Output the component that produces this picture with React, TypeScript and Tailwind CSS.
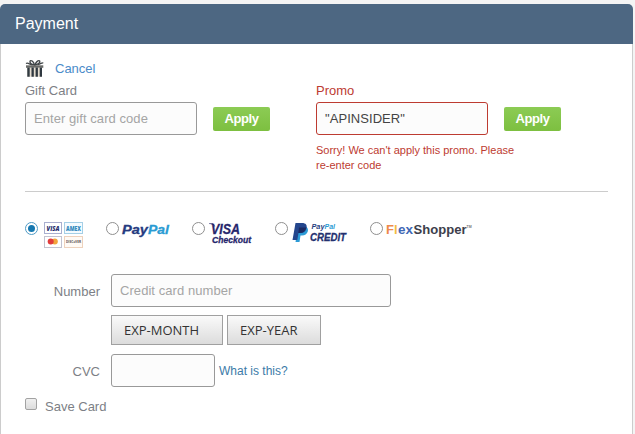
import type React from "react"

const logoFont = "'Open Sans', 'Noto Sans', sans-serif"
const boldLogoFont = "'Liberation Sans', Arial, sans-serif"

function GiftIcon() {
  return (
    <svg width="20" height="19" viewBox="0 0 20 19">
      <g fill="none" stroke="#3f4447" strokeWidth="1.3">
        <path d="M9.500 6C7.500 5.500 4.500 4.500 5 2.300C5.600.3 8.700 2.500 9.500 6Z" />
        <path d="M10 6C11 2.500 14 .5 14.800 2.100C15.400 4 12.500 5.500 10 6Z" />
        <path d="M1 4.500C3 3.200 4.500 5.500 7.500 5.800M12.500 5.600C15 5.500 16 3.600 18.300 3.800" />
      </g>
      <path d="M1 6.300h17.300v2.500H1z" fill="#6a6b68" />
      <path d="M2.300 8.800H17v8.900H2.300z" fill="#e5ddd0" />
      <path d="M2.300 8.500h2.400v9.200H2.300zM6.500 8.500h2.300v9.200H6.500zM10.600 8.500h2.300v9.200h-2.300zM14.700 8.500H17v9.200h-2.300z" fill="#303941" />
    </svg>
  )
}

function CardLogos() {
  return (
    <svg width="41" height="28" viewBox="0 0 41 28" fontFamily={logoFont}>
      <rect x="1.500" y="1.500" width="17" height="11" fill="#fff" stroke="#a9afcf" />
      <text x="3.500" y="10" fontSize="7" fontWeight="800" fontStyle="italic" fill="#28306f" textLength="13" lengthAdjust="spacingAndGlyphs">VISA</text>
      <rect x="21.500" y="1.500" width="18" height="11" fill="#f4fbff" stroke="#a5cfe6" />
      <text x="23" y="10" fontSize="6.500" fontWeight="800" fill="#3289bd" textLength="15" lengthAdjust="spacingAndGlyphs">AMEX</text>
      <rect x="1.500" y="15.500" width="17" height="11" fill="#fff" stroke="#c3c3d0" />
      <circle cx="11.800" cy="20.500" r="3" fill="#f2a53c" />
      <circle cx="7.700" cy="20.500" r="3" fill="#e13c3c" />
      <rect x="21.500" y="15.500" width="18" height="11" fill="#fffaf5" stroke="#eed2bd" />
      <text x="23" y="22" fontSize="3.500" fontWeight="700" fill="#55504d" textLength="15" lengthAdjust="spacingAndGlyphs">DISC●VER</text>
    </svg>
  )
}

function PayPalLogo() {
  return (
    <svg width="50" height="20" viewBox="0 0 50 20" fontFamily={boldLogoFont} fontWeight="700" fontStyle="italic" strokeWidth=".3">
      <text x="1" y="12.500" fontSize="13.500" fill="#253b80" stroke="#253b80" textLength="26" lengthAdjust="spacingAndGlyphs">Pay</text>
      <text x="27" y="12.500" fontSize="13.500" fill="#2a9bd3" stroke="#2a9bd3" textLength="21" lengthAdjust="spacingAndGlyphs">Pal</text>
    </svg>
  )
}

function VisaCheckoutLogo() {
  return (
    <svg
      width="50"
      height="26"
      viewBox="0 0 50 26"
      fontFamily={boldLogoFont}
      fontWeight="700"
      fontStyle="italic"
      fill="#26266c"
      stroke="#26266c"
      strokeWidth=".3"
    >
      <text x="4" y="13" fontSize="14.500" textLength="29" lengthAdjust="spacingAndGlyphs">VISA</text>
      <path d="M2 2.500h4l2 3C6.500 4 5 3 2 2.500z" />
      <text x="5" y="21.500" fontSize="9" textLength="39" lengthAdjust="spacingAndGlyphs">Checkout</text>
    </svg>
  )
}

function PayPalCreditLogo() {
  return (
    <svg width="57" height="24" viewBox="0 0 57 24" fontFamily={boldLogoFont} fontWeight="700" fontStyle="italic">
      <path d="M6 6h8.500c3 2 1.500 8.500-4.500 8.500H8.500L7.500 21H3.500z" fill="#2c9bd6" />
      <path d="M3.500 2h6.500c4 0 5.300 2.200 4.500 5.200-.8 3.500-3.200 4.800-6.500 4.800H6.500L5.300 19H.5z" fill="#24468d" />
      <path d="M7 6.500h7.300c-.8 3.500-3 5.500-6.300 5.500H6.300z" fill="#1b2a62" />
      <text x="19.500" y="8" fontSize="7" fill="#26417f" textLength="13" lengthAdjust="spacingAndGlyphs">Pay</text>
      <text x="32.500" y="8" fontSize="7" fill="#2a9bd3" textLength="10.500" lengthAdjust="spacingAndGlyphs">Pal</text>
      <text x="18" y="19.500" fontSize="11.500" fill="#23306f" stroke="#23306f" strokeWidth=".3" textLength="36" lengthAdjust="spacingAndGlyphs">CREDIT</text>
    </svg>
  )
}

function FlexShopperLogo() {
  return (
    <svg width="88" height="20" viewBox="0 0 88 20" fontFamily={boldLogoFont} fontSize="13" fontWeight="700">
      <text x="1" y="13" fill="#ee8a4a">F</text>
      <text x="9" y="13" fill="#f3bb3f">l</text>
      <text x="13" y="13" fill="#3f68b5" textLength="15" lengthAdjust="spacingAndGlyphs">ex</text>
      <text x="28.500" y="13" fill="#3d3e4c" textLength="53" lengthAdjust="spacingAndGlyphs">Shopper</text>
      <text x="81.500" y="7" fill="#777" fontSize="3.500">TM</text>
    </svg>
  )
}

function Radio({ checked = false }: { checked?: boolean }) {
  return (
    <span
      role="radio"
      aria-checked={checked}
      className={`mt-px flex size-[13px] shrink-0 items-center justify-center rounded-full border bg-white ${
        checked ? "border-[#4f9bc6]" : "border-[#8f8f8f]"
      }`}
    >
      {checked && <span className="size-[7px] rounded-full bg-[#1678b0]" />}
    </span>
  )
}

function ApplyButton() {
  return (
    <button className="mt-[5px] ml-4 h-6 w-[57px] shrink-0 rounded-[2px] bg-linear-to-b from-[#8ccb54] to-[#7dbf40] text-[13px] leading-6 font-bold tracking-[-0.4px] text-white">
      Apply
    </button>
  )
}

function SelectButton({ className, children }: { className: string; children: React.ReactNode }) {
  return (
    <button
      className={`h-[30px] border border-[#a0a0a0] bg-linear-to-b from-[#fafafa] to-[#dcdcdc] pt-px pl-3 text-left font-['Open_Sans',sans-serif] text-[13px] text-[#333] ${className}`}
    >
      {children}
    </button>
  )
}

const inputClass =
  "block h-[33px] rounded-[3px] border border-[#999] bg-[#fcfcfc] px-2 text-[13px] tracking-[0.06px] text-[#444] outline-none placeholder:text-[#a5a5a5] placeholder:opacity-100"

export default function App() {
  return (
    <div className="h-[434px] w-[635px] overflow-hidden bg-[#f4f4f4] pt-1 pr-0.5 font-['Liberation_Sans',Arial,sans-serif] text-[13px] text-[#7d7f86]">
      <header className="h-10 rounded-t-[5px] bg-[#4d6782] pl-[15px] text-base leading-[39px] text-white">Payment</header>

      <main className="h-[390px] border-x border-[#ccc] bg-white pl-6">
        <section className="flex h-[148px] w-[583px] border-b border-[#ccc] pt-[15px]">
          <div className="w-[291px]">
            <div className="flex h-[22px] items-start">
              <GiftIcon />
              <a className="ml-2.5 leading-[19px] text-[#4a8bc9]">Cancel</a>
            </div>
            <div className="h-[21px] leading-5">Gift Card</div>
            <div className="flex">
              <input className={`w-[172px] ${inputClass}`} placeholder="Enter gift card code" />
              <ApplyButton />
            </div>
          </div>
          <div className="pt-[22px]">
            <div className="h-[21px] leading-5 text-[#bd3b31]">Promo</div>
            <div className="flex">
              <input className={`w-[172px] ${inputClass} border-[#bd3b31]!`} defaultValue={'"APINSIDER"'} />
              <ApplyButton />
            </div>
            <p className="mt-2 w-[205px] text-[11px] leading-[15px] text-[#bd3b31]">
              Sorry! We can't apply this promo. Please re-enter code
            </p>
          </div>
        </section>

        <section className="flex h-[82px] pt-[29px]">
          <div className="flex w-[81px] gap-[5px]">
            <Radio checked />
            <CardLogos />
          </div>
          <div className="flex w-[86px] gap-0.5">
            <Radio />
            <PayPalLogo />
          </div>
          <div className="flex w-[83px] gap-0.5">
            <Radio />
            <VisaCheckoutLogo />
          </div>
          <div className="flex w-[95px] gap-1">
            <Radio />
            <PayPalCreditLogo />
          </div>
          <div className="flex gap-0.5">
            <Radio />
            <FlexShopperLogo />
          </div>
        </section>

        <section>
          <div className="flex items-center">
            <label className="w-[75px] pt-0.5 text-right">Number</label>
            <input className={`ml-[11px] w-[280px] ${inputClass}`} placeholder="Credit card number" />
          </div>
          <div className="mt-2 ml-[86px] flex gap-1">
            <SelectButton className="w-28">EXP-MONTH</SelectButton>
            <SelectButton className="w-[94px]">EXP-YEAR</SelectButton>
          </div>
          <div className="mt-[9px] flex items-center">
            <label className="w-[75px] pt-0.5 text-right">CVC</label>
            <input className={`ml-[11px] w-[104px] ${inputClass}`} />
            <a className="ml-1 text-xs text-[#3c7ba8]">What is this?</a>
          </div>
          <div className="mt-[11px] flex">
            <span
              role="checkbox"
              aria-checked={false}
              className="size-3 rounded-[2px] border border-[#a2a2a2] bg-linear-to-b from-[#f0f0f0] to-[#dcdcdc]"
            />
            <span className="ml-2 leading-[17px]">Save Card</span>
          </div>
        </section>
      </main>
    </div>
  )
}
